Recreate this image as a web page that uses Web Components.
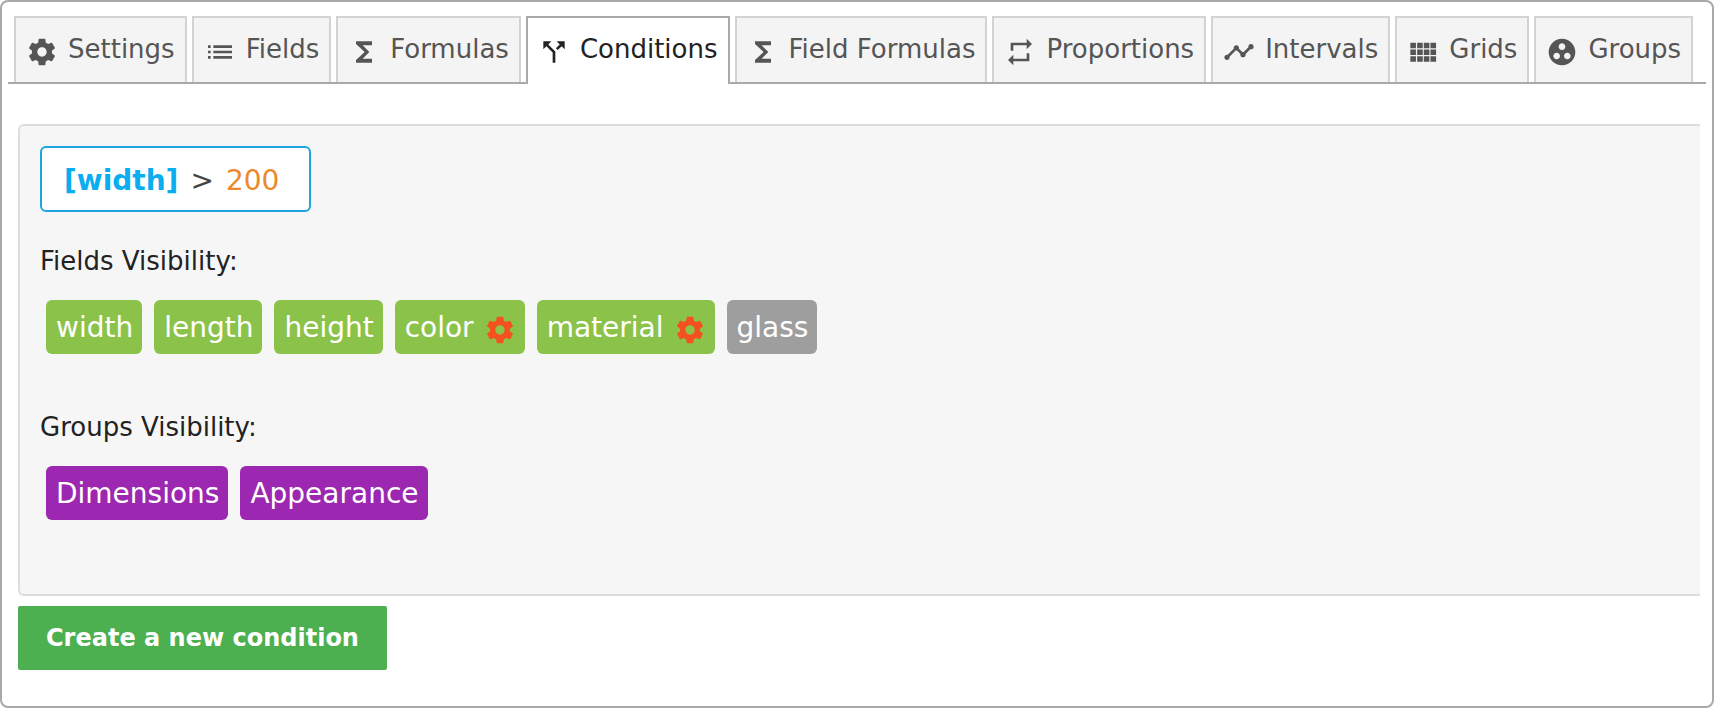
<!DOCTYPE html>
<html lang="en">
<head>
<meta charset="utf-8">
<meta name="viewport" content="width=device-width, initial-scale=1">
<title>Conditions</title>
<style>
  html, body { margin: 0; height: 100%; background: #fff; }
  body { font-family: Verdana, "DejaVu Sans", sans-serif; font-size: 26px; color: #222; }
</style>
</head>
<body>
<app-panel>
  <tab-strip slot="tabs">
    <tab-item icon="settings">Settings</tab-item>
    <tab-item icon="list">Fields</tab-item>
    <tab-item icon="sigma">Formulas</tab-item>
    <tab-item icon="split" selected>Conditions</tab-item>
    <tab-item icon="sigma">Field Formulas</tab-item>
    <tab-item icon="repeat">Proportions</tab-item>
    <tab-item icon="timeline">Intervals</tab-item>
    <tab-item icon="grid">Grids</tab-item>
    <tab-item icon="groups">Groups</tab-item>
  </tab-strip>
  <condition-card>
    <condition-rule slot="rule" field="[width]" operator="&gt;" value="200"></condition-rule>
    <visibility-list heading="Fields Visibility:">
      <tag-chip>width</tag-chip>
      <tag-chip>length</tag-chip>
      <tag-chip>height</tag-chip>
      <tag-chip configurable>color</tag-chip>
      <tag-chip configurable>material</tag-chip>
      <tag-chip kind="off">glass</tag-chip>
    </visibility-list>
    <visibility-list heading="Groups Visibility:">
      <tag-chip kind="group">Dimensions</tag-chip>
      <tag-chip kind="group">Appearance</tag-chip>
    </visibility-list>
  </condition-card>
  <action-button slot="actions">Create a new condition</action-button>
</app-panel>

<script>
const ICONS = {
  settings: '<path d="M19.43 12.98c.04-.32.07-.64.07-.98s-.03-.66-.07-.98l2.11-1.65c.19-.15.24-.42.12-.64l-2-3.46c-.12-.22-.39-.3-.61-.22l-2.49 1c-.52-.4-1.08-.73-1.69-.98l-.38-2.65C14.46 2.18 14.25 2 14 2h-4c-.25 0-.46.18-.49.42l-.38 2.65c-.61.25-1.17.59-1.69.98l-2.49-1c-.23-.09-.49 0-.61.22l-2 3.46c-.13.22-.07.49.12.64l2.11 1.65c-.04.32-.07.65-.07.98s.03.66.07.98l-2.11 1.65c-.19.15-.24.42-.12.64l2 3.46c.12.22.39.3.61.22l2.49-1c.52.4 1.08.73 1.69.98l.38 2.65c.03.24.24.42.49.42h4c.25 0 .46-.18.49-.42l.38-2.65c.61-.25 1.17-.59 1.69-.98l2.49 1c.23.09.49 0 .61-.22l2-3.46c.12-.22.07-.49-.12-.64l-2.11-1.65zM12 15.5c-1.93 0-3.5-1.57-3.5-3.5s1.57-3.5 3.5-3.5 3.5 1.57 3.5 3.5-1.57 3.5-3.5 3.5z"/>',
  list: '<path d="M3 13h2v-2H3v2zm0 4h2v-2H3v2zm0-8h2V7H3v2zm4 4h14v-2H7v2zm0 4h14v-2H7v2zM7 7v2h14V7H7z"/>',
  sigma: '<path d="M18 4H6v2l6.500 6L6 18v2h12v-3h-7l5-5-5-5h7z"/>',
  split: '<path d="M14 4l2.290 2.290-2.880 2.880 1.420 1.420 2.880-2.880L20 10V4zM10 4H4v6l2.290-2.290 4.710 4.700V20h2v-8.410l-5.290-5.300z"/>',
  repeat: '<path d="M7 7h10v3l4-4-4-4v3H5v6h2zM17 17H7v-3l-4 4 4 4v-3h12v-6h-2z"/>',
  timeline: '<path d="M23 8c0 1.100-.900 2-2 2-.180 0-.350-.020-.510-.070l-3.560 3.550c.050.160.070.340.070.520 0 1.100-.900 2-2 2s-2-.900-2-2c0-.180.020-.360.070-.520l-2.550-2.550c-.160.050-.340.070-.520.070s-.360-.020-.520-.070l-4.550 4.560c.050.160.070.330.070.510 0 1.100-.900 2-2 2s-2-.900-2-2 .900-2 2-2c.180 0 .350.020.510.070l4.560-4.550C8.020 9.360 8 9.180 8 9c0-1.100.900-2 2-2s2 .900 2 2c0 .180-.020.360-.070.520l2.550 2.550c.160-.050.340-.070.520-.070s.360.020.520.070l3.550-3.560C19.020 8.350 19 8.180 19 8c0-1.100.900-2 2-2s2 .900 2 2z"/>',
  grid: '<path d="M2.500 5h4.200v4.200H2.500zM7.600 5h4.200v4.200H7.600zM12.600 5h4.200v4.200h-4.200zM17.600 5h4.200v4.200h-4.200zM2.500 10.100h4.200v4.200H2.500zM7.600 10.100h4.200v4.200H7.600zM12.600 10.100h4.200v4.200h-4.200zM17.600 10.100h4.200v4.200h-4.200zM2.500 15.200h4.200v4.200H2.500zM7.600 15.200h4.200v4.200H7.600zM12.600 15.200h4.200v4.200h-4.200zM17.600 15.200h4.200v4.200h-4.200z"/>',
  groups: '<path d="M12 2C6.480 2 2 6.480 2 12s4.480 10 10 10 10-4.480 10-10S17.520 2 12 2zM8 17.500c-1.380 0-2.500-1.120-2.500-2.500s1.120-2.500 2.500-2.500 2.500 1.120 2.500 2.500-1.120 2.500-2.500 2.500zM9.500 8c0-1.380 1.120-2.500 2.500-2.500s2.500 1.120 2.500 2.500-1.120 2.500-2.500 2.500S9.500 9.380 9.500 8zm6.500 9.500c-1.380 0-2.500-1.120-2.500-2.500s1.120-2.500 2.500-2.500 2.500 1.120 2.500 2.500-1.120 2.500-2.500 2.500z"/>'
};
const icon = name => `<svg viewBox="0 0 24 24" aria-hidden="true">${ICONS[name]}</svg>`;

const define = (name, render) => customElements.define(name, class extends HTMLElement {
  connectedCallback() {
    if (!this.shadowRoot) this.attachShadow({ mode: 'open' }).innerHTML = render(this);
  }
});

define('app-panel', () => `
  <style>
    :host { display: flex; flex-direction: column; box-sizing: border-box; min-height: 100%;
      border: 2px solid #a9a9a9; border-radius: 8px; padding: 14px 6px 32px; }
    main { padding: 40px 6px 0 10px; }
    footer { padding: 10px 10px 0; }
  </style>
  <slot name="tabs"></slot>
  <main><slot></slot></main>
  <footer><slot name="actions"></slot></footer>`);

define('tab-strip', () => `
  <style>
    :host { display: block; }
    nav { display: flex; gap: 5px; padding: 0 6px; border-bottom: 2px solid #a9a9a9; }
  </style>
  <nav role="tablist"><slot></slot></nav>`);

define('tab-item', el => `
  <style>
    :host { display: block; white-space: nowrap; }
    :host([selected]) { margin-bottom: -2px; }
    button { display: flex; align-items: center; gap: 10px; box-sizing: border-box; height: 66px;
      margin: 0; padding: 0 10px; border: 2px solid #d3d3d3; border-bottom: 0; border-radius: 0;
      background: #f4f4f4; color: #555; font: inherit; line-height: 32px; cursor: pointer; }
    :host([selected]) button { height: 68px; padding-bottom: 2px; border-color: #a9a9a9; background: #fff; color: #222; }
    svg { width: 32px; height: 32px; margin-top: 4px; fill: currentColor; }
    span { padding-bottom: 2px; }
  </style>
  <button type="button" role="tab" aria-selected="${el.hasAttribute('selected')}">${icon(el.getAttribute('icon'))}<span><slot></slot></span></button>`);

define('condition-card', () => `
  <style>
    :host { display: flex; flex-direction: column; align-items: flex-start; padding: 20px 20px 50px;
      border: 2px solid #ddd; border-right: 0; border-radius: 6px 0 0 6px; background: #f6f6f6; }
  </style>
  <slot name="rule"></slot>
  <slot></slot>`);

define('condition-rule', el => `
  <style>
    :host { display: flex; gap: 12px; padding: 16px 30px 12px 22px; border: 2px solid #1ba5dc; border-radius: 6px;
      background: #fff; color: #444; font-size: 28px; line-height: 34px; }
    b { color: #0aaef0; }
    .value { color: #eb8a2c; }
  </style>
  <b>${el.getAttribute('field')}</b><span>${el.getAttribute('operator')}</span><span class="value">${el.getAttribute('value')}</span>`);

define('visibility-list', el => `
  <style>
    :host { display: block; margin-bottom: 24px; }
    h2 { margin: 32px 0 22px; font-size: 26px; font-weight: 400; line-height: 34px; }
    div { display: flex; flex-wrap: wrap; gap: 12px; padding: 0 6px; }
  </style>
  <h2>${el.getAttribute('heading')}</h2>
  <div><slot></slot></div>`);

define('tag-chip', el => `
  <style>
    :host { display: flex; align-items: center; gap: 10px; box-sizing: border-box; height: 54px; padding: 0 9px 0 10px;
      border-radius: 6px; background: #8bc34a; color: #fff; font-size: 28px; line-height: 34px; }
    :host([kind="off"]) { background: #9e9e9e; }
    :host([kind="group"]) { background: #9c27b0; }
    span { padding-top: 2px; }
    button { display: flex; margin: 0; padding: 6px 0 0; border: 0; background: none; color: #f4511e; cursor: pointer; }
    svg { width: 32px; height: 32px; fill: currentColor; }
  </style>
  <span><slot></slot></span>${el.hasAttribute('configurable') ? `<button type="button" aria-label="Configure">${icon('settings')}</button>` : ''}`);

define('action-button', () => `
  <style>
    :host { display: block; }
    button { display: block; margin: 0; padding: 16px 28px; border: 0; border-radius: 2px;
      background: #4caf50; color: #fff; font: inherit; font-size: 24px; font-weight: 700; line-height: 32px; cursor: pointer; }
  </style>
  <button type="button"><slot></slot></button>`);
</script>
</body>
</html>
